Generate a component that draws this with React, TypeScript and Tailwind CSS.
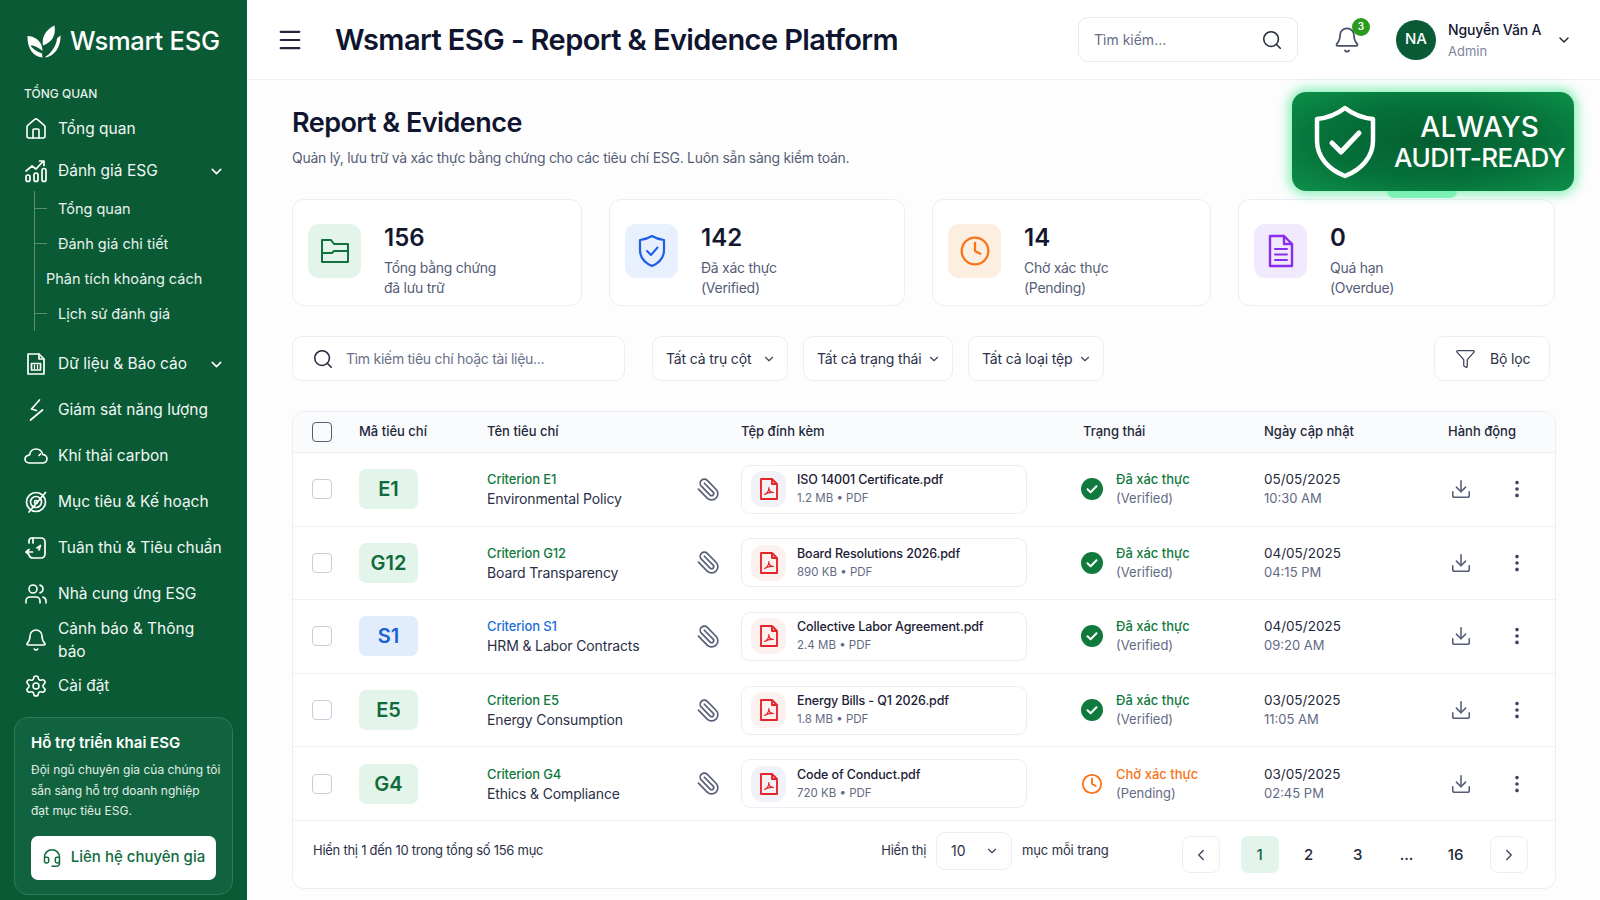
import {
  Bell,
  ChevronDown,
  ChevronLeft,
  ChevronRight,
  Clock,
  Download,
  Funnel,
  Headset,
  House,
  Menu,
  MoreVertical,
  Paperclip,
  Search,
  Settings,
  Users,
} from "lucide-react"
import type { ReactNode } from "react"

function Svg({ children, className }: { children: ReactNode; className?: string }) {
  return (
    <svg viewBox="0 0 24 24" fill="none" stroke="currentColor" strokeWidth="1.7" strokeLinecap="round" strokeLinejoin="round" className={className}>
      {children}
    </svg>
  )
}

function Logo() {
  return (
    <svg viewBox="0 0 34 33" className="w-[34px] h-[33px]" fill="#fff">
      <path d="M0.5 11C6 11 11.5 14 14 19C15 21.5 15.5 24 15.5 26C10 21 5 20 3.2 20.6C6 24 10 27 15 28.5L15.5 32.5C7 32 0 24 0.5 11Z" />
      <path d="M16 20.5C14.5 13 18 5 27.5 0.5C29 9 26 17 16 20.5Z" />
      <path d="M33.5 10.5C34 22 27 32 17.5 32.5C24 28.5 29.5 21 30 13.5C31 12.5 32 11.5 33.5 10.5Z" />
    </svg>
  )
}

function ChartIcon() {
  return (
    <Svg className="w-6 h-6">
      <rect x="2" y="16" width="4" height="6.5" rx="2" />
      <rect x="10" y="14" width="4" height="8.5" rx="2" />
      <rect x="18" y="9.5" width="4" height="13" rx="2" />
      <path d="M2 12L8 7L12 10L19 2.5M15.5 2H20V6.5" />
    </Svg>
  )
}

function DataIcon() {
  return (
    <Svg className="w-6 h-6">
      <path d="M4 2H15L20 7V22H4Z" />
      <path d="M15 2V7H20" />
      <rect x="7.5" y="11.5" width="9" height="6.5" />
      <path d="M10.5 13v3.5M13.5 13v3.5" strokeWidth="1.2" />
    </Svg>
  )
}

function EnergyIcon() {
  return (
    <Svg className="w-6 h-6">
      <path d="M15.5 2L7.5 11L12.5 12.5" />
      <path d="M18.5 12L6.5 22" />
    </Svg>
  )
}

function CloudIcon() {
  return (
    <Svg className="w-6 h-6">
      <path d="M6 19H18.5C21 19 23 17.2 23 14.8C23 12.4 21 10.6 18.8 10.6C18 7.4 15.2 5 12 5C8.6 5 6 7.5 5.6 10.8C3 11.2 1 13 1 15.2C1 17.4 3.2 19 6 19Z" />
      <path d="M15 11.5L16.5 10" />
    </Svg>
  )
}

function TargetIcon() {
  return (
    <Svg className="w-6 h-6">
      <circle cx="12" cy="12" r="9.5" />
      <circle cx="12" cy="12" r="5.5" />
      <circle cx="12" cy="12" r="1.5" />
      <path d="M21.5 2.5L5 22" />
    </Svg>
  )
}

function ComplianceIcon() {
  return (
    <Svg className="w-6 h-6">
      <path d="M5 7V5C5 3.3 6.3 2 8 2H17C19.2 2 21 3.8 21 6V18C21 20.2 19.2 22 17 22H9C7 22 5.5 21 5 19" />
      <path d="M9 2V7" />
      <path d="M13 12L16.5 9.5L15 14" />
      <path d="M2 16H8.5M5 13.5L2 16L5 18.5" />
    </Svg>
  )
}

function PdfIcon() {
  return (
    <svg viewBox="0 0 24 24" fill="none" stroke="#e6252a" strokeWidth="1.9" strokeLinejoin="round" className="w-6 h-[26px]">
      <path d="M4 2H15L20 7V22H4Z" />
      <path d="M15 2V7H20" />
      <path d="M7.5 17.5C10 16.5 11.8 13.5 11.8 10.5C11.8 13.5 13.5 15.5 16.5 15.5C13.5 15.2 10 16 7.5 17.5Z" strokeWidth="1.1" />
    </svg>
  )
}

function CheckCircle() {
  return (
    <svg viewBox="0 0 22 22" className="w-[22px] h-[22px]">
      <circle cx="11" cy="11" r="11" fill="#107a3e" />
      <path d="M6.5 11.3L9.6 14.2L15.5 8.2" fill="none" stroke="#fff" strokeWidth="2" strokeLinecap="round" strokeLinejoin="round" />
    </svg>
  )
}

function NavRow({ icon, label, chevron, tall }: { icon: ReactNode; label: string; chevron?: boolean; tall?: boolean }) {
  return (
    <div className={tall ? "flex items-center h-[46px] pl-[24px] pr-[22px]" : "flex items-center h-[42px] pl-[24px] pr-[22px]"}>
      <div className="w-[24px] flex justify-center text-white">{icon}</div>
      <span className="ml-[10px] text-[15.5px] text-[#f1f7f3] flex-1">{label}</span>
      {chevron && <ChevronDown className="w-[17px] h-[17px] text-white" strokeWidth={2.2} />}
    </div>
  )
}

function Sidebar() {
  const sub = ["Tổng quan", "Đánh giá chi tiết", "Phân tích khoảng cách", "Lịch sử đánh giá"]
  return (
    <aside className="w-[247px] h-[900px] shrink-0 bg-[#0a5a36] flex flex-col">
      <div className="flex items-center h-[84px] pl-[27px] pb-[1px]">
        <Logo />
        <span className="ml-[9px] text-[25.5px] font-medium tracking-[-0.01em] text-white">Wsmart ESG</span>
      </div>
      <div className="h-[24px] pl-[24px] text-[12px] font-medium leading-[20px] text-[#e4efe9]">TỔNG QUAN</div>
      <NavRow icon={<House className="w-6 h-6" strokeWidth={1.6} />} label="Tổng quan" />
      <NavRow icon={<ChartIcon />} label="Đánh giá ESG" chevron />
      <div className="ml-[34px] mt-[-1px] mb-[10px] w-[160px] border-l border-[#5a8d75]">
        {sub.map((s) => (
          <div key={s} className="flex items-center h-[35px]">
            <div className="w-[12px] h-px bg-[#5a8d75]" />
            <span className="ml-[11px] text-[14.5px] text-[#e9f2ed] whitespace-nowrap">{s}</span>
          </div>
        ))}
      </div>
      <NavRow tall icon={<DataIcon />} label="Dữ liệu & Báo cáo" chevron />
      <NavRow tall icon={<EnergyIcon />} label="Giám sát năng lượng" />
      <NavRow tall icon={<CloudIcon />} label="Khí thải carbon" />
      <NavRow tall icon={<TargetIcon />} label="Mục tiêu & Kế hoạch" />
      <NavRow tall icon={<ComplianceIcon />} label="Tuân thủ & Tiêu chuẩn" />
      <NavRow tall icon={<Users className="w-6 h-6" strokeWidth={1.6} />} label="Nhà cung ứng ESG" />
      <NavRow tall icon={<Bell className="w-6 h-6" strokeWidth={1.6} />} label="Cảnh báo & Thông báo" />
      <NavRow tall icon={<Settings className="w-6 h-6" strokeWidth={1.6} />} label="Cài đặt" />
      <div className="mx-[14px] mt-[8px] h-[178px] rounded-[14px] border border-[#2f7a58] bg-[#116340] px-[16px] pt-[13px]">
        <div className="text-[15px] font-semibold text-white leading-[24px]">Hỗ trợ triển khai ESG</div>
        <div className="mt-[5px] text-[12px] leading-[20.5px] text-[#e1ede7] whitespace-nowrap">
          Đội ngũ chuyên gia của chúng tôi
          <br />
          sẵn sàng hỗ trợ doanh nghiệp
          <br />
          đạt mục tiêu ESG.
        </div>
        <div className="mt-[14px] h-[44px] rounded-[7px] bg-white flex items-center justify-center text-[#0f6b3e]">
          <Headset className="w-[20px] h-[20px]" strokeWidth={1.8} />
          <span className="ml-[9px] text-[15px] font-medium">Liên hệ chuyên gia</span>
        </div>
      </div>
    </aside>
  )
}

function Header() {
  return (
    <header className="h-[80px] shrink-0 border-b border-[#eef0f5] bg-white flex items-center pl-[31px] pr-[28px]">
      <Menu className="w-[28px] h-[28px] text-[#23283b] mr-[5px] -ml-[2px]" strokeWidth={1.8} />
      <h1 className="ml-[26px] text-[29px] font-semibold tracking-[-0.02em] text-[#10152f] flex-1 whitespace-nowrap">Wsmart ESG - Report & Evidence Platform</h1>
      <div className="w-[220px] h-[45px] rounded-[10px] border border-[#e8eaf3] flex items-center pl-[15px] pr-[14px]">
        <span className="flex-1 text-[14px] text-[#666d85]">Tìm kiếm...</span>
        <Search className="w-[22px] h-[22px] text-[#23283b]" strokeWidth={1.7} />
      </div>
      <div className="relative ml-[35px] mr-[35px]">
        <Bell className="w-[28px] h-[28px] text-[#474f6b]" strokeWidth={1.5} />
        <span className="absolute -top-[8px] left-[19px] w-[18px] h-[18px] rounded-full bg-[#2a9b1e] text-white text-[10px] font-semibold flex items-center justify-center">3</span>
      </div>
      <div className="w-[40px] h-[40px] rounded-full bg-[#0a5a36] text-white text-[15px] font-medium flex items-center justify-center">NA</div>
      <div className="ml-[12px] w-[108px]">
        <div className="text-[14px] font-medium text-[#14182f] leading-[22px] tracking-[-0.01em] whitespace-nowrap">Nguyễn Văn A</div>
        <div className="text-[13px] text-[#7d849c] leading-[20px]">Admin</div>
      </div>
      <ChevronDown className="w-[16px] h-[16px] text-[#23283b]" strokeWidth={2.2} />
    </header>
  )
}

function AuditBadge() {
  return (
    <div className="absolute top-[92px] left-[1292px] w-[282px] h-[99px] rounded-[14px] bg-[radial-gradient(ellipse_at_center,#055f30_0%,#06713a_55%,#0c9149_100%)] shadow-[0_0_12px_3px_rgba(62,232,140,0.65)] flex items-center pl-[22px]">
      <svg viewBox="0 0 62 74" className="w-[62px] h-[74px]" fill="none" stroke="#fff" strokeLinecap="round" strokeLinejoin="round">
        <path d="M31 3C40 10 49 13 59 14V36C59 52 47 65 31 71C15 65 3 52 3 36V14C13 13 22 10 31 3Z" strokeWidth="4.5" />
        <path d="M18 38L27 47L45 28" strokeWidth="5" />
      </svg>
      <div className="ml-[18px] text-white text-center font-medium whitespace-nowrap">
        <div className="text-[28px] leading-[32px] tracking-[0.01em]">ALWAYS</div>
        <div className="text-[26px] leading-[30px] tracking-[-0.02em]">AUDIT-READY</div>
      </div>
      <div className="absolute -bottom-[7px] left-[95px] w-[70px] h-[7px] rounded-b-full bg-[#6cf0ab] opacity-80" />
    </div>
  )
}

const stats = [
  { n: "156", l1: "Tổng bằng chứng", l2: "đã lưu trữ", bg: "bg-[#e3f4ea]", icon: <FolderIcon /> },
  { n: "142", l1: "Đã xác thực", l2: "(Verified)", bg: "bg-[#e8f0fe]", icon: <ShieldIcon /> },
  { n: "14", l1: "Chờ xác thực", l2: "(Pending)", bg: "bg-[#fdeee2]", icon: <Clock className="w-[32px] h-[32px] text-[#f97316]" strokeWidth={1.7} /> },
  { n: "0", l1: "Quá hạn", l2: "(Overdue)", bg: "bg-[#f1eafd]", icon: <DocIcon /> },
]

function FolderIcon() {
  return (
    <svg viewBox="0 0 30 30" className="w-[30px] h-[30px]" fill="none" stroke="#11703c" strokeWidth="2" strokeLinejoin="round" strokeLinecap="round">
      <path d="M2 4H11L14 8H28V26H2Z" />
      <path d="M2 17H12L14 15H28" />
    </svg>
  )
}

function ShieldIcon() {
  return (
    <svg viewBox="0 0 28 34" className="w-[28px] h-[34px]" fill="none" stroke="#1d5fe8" strokeWidth="2.2" strokeLinejoin="round" strokeLinecap="round">
      <path d="M14 2C18 4.5 22 5.5 26 6V16C26 24 21 29 14 32C7 29 2 24 2 16V6C6 5.5 10 4.5 14 2Z" />
      <path d="M9 17L13 21L19.5 13.5" strokeWidth="2" />
    </svg>
  )
}

function DocIcon() {
  return (
    <svg viewBox="0 0 26 34" className="w-[26px] h-[34px]" fill="none" stroke="#8b2cf0" strokeWidth="2.4" strokeLinejoin="round" strokeLinecap="round">
      <path d="M2 2H16L24 10V32H2Z" />
      <path d="M16 2V10H24" />
      <path d="M7 15H19M7 20.5H19M7 26H19" strokeWidth="2" />
    </svg>
  )
}

function Stats() {
  return (
    <div className="grid grid-cols-[290px_296px_279px_317px] gap-x-[27px] mt-[31px]">
      {stats.map((s) => (
        <div key={s.n} className="h-[107px] rounded-[12px] border border-[#eceef6] bg-white flex pl-[15px] pt-[24px]">
          <div className={"w-[53px] h-[54px] rounded-[11px] flex items-center justify-center " + s.bg}>{s.icon}</div>
          <div className="ml-[23px] -mt-[1px]">
            <div className="text-[24px] font-semibold leading-[30px] text-[#14182f]">{s.n}</div>
            <div className="mt-[5px] text-[14px] leading-[20px] tracking-[-0.02em] text-[#565d77]">{s.l1}</div>
            <div className="text-[14px] leading-[20px] tracking-[-0.02em] text-[#565d77]">{s.l2}</div>
          </div>
        </div>
      ))}
    </div>
  )
}

function FilterSelect({ label, className }: { label: string; className: string }) {
  return (
    <div className={"h-[45px] rounded-[10px] border border-[#eceef6] bg-white flex items-center justify-between pl-[13px] pr-[11px] " + className}>
      <span className="text-[14px] tracking-[-0.01em] text-[#2b3047] whitespace-nowrap">{label}</span>
      <ChevronDown className="w-[14px] h-[14px] text-[#40465f]" strokeWidth={2} />
    </div>
  )
}

function Filters() {
  return (
    <div className="flex items-center mt-[30px]">
      <div className="w-[333px] h-[45px] rounded-[10px] border border-[#eceef6] bg-white flex items-center pl-[19px]">
        <Search className="w-[22px] h-[22px] text-[#23283b]" strokeWidth={1.7} />
        <span className="ml-[12px] text-[14px] tracking-[-0.02em] text-[#6a7089]">Tìm kiếm tiêu chí hoặc tài liệu...</span>
      </div>
      <FilterSelect label="Tất cả trụ cột" className="ml-[27px] w-[136px]" />
      <FilterSelect label="Tất cả trạng thái" className="ml-[15px] w-[150px]" />
      <FilterSelect label="Tất cả loại tệp" className="ml-[15px] w-[136px]" />
      <div className="ml-[330px] w-[116px] h-[45px] rounded-[10px] border border-[#eceef6] bg-white flex items-center pl-[20px]">
        <Funnel className="w-[21px] h-[21px] text-[#40465f]" strokeWidth={1.5} />
        <span className="ml-[14px] text-[14px] tracking-[-0.01em] text-[#2b3047]">Bộ lọc</span>
      </div>
    </div>
  )
}

const rows = [
  { code: "E1", c: "Criterion E1", name: "Environmental Policy", file: "ISO 14001 Certificate.pdf", meta: "1.2 MB • PDF", date: "05/05/2025", time: "10:30 AM", tone: "green", fileBg: "bg-[#f0f2f7]", ok: true },
  { code: "G12", c: "Criterion G12", name: "Board Transparency", file: "Board Resolutions 2026.pdf", meta: "890 KB • PDF", date: "04/05/2025", time: "04:15 PM", tone: "green", fileBg: "bg-[#fdf1f0]", ok: true },
  { code: "S1", c: "Criterion S1", name: "HRM & Labor Contracts", file: "Collective Labor Agreement.pdf", meta: "2.4 MB • PDF", date: "04/05/2025", time: "09:20 AM", tone: "blue", fileBg: "bg-[#fdf1f0]", ok: true },
  { code: "E5", c: "Criterion E5", name: "Energy Consumption", file: "Energy Bills - Q1 2026.pdf", meta: "1.8 MB • PDF", date: "03/05/2025", time: "11:05 AM", tone: "green", fileBg: "bg-[#fdf1f0]", ok: true },
  { code: "G4", c: "Criterion G4", name: "Ethics & Compliance", file: "Code of Conduct.pdf", meta: "720 KB • PDF", date: "03/05/2025", time: "02:45 PM", tone: "green", fileBg: "bg-[#f0f2f7]", ok: false },
]

const cols = "grid grid-cols-[66px_128px_254px_342px_181px_184px_108px] items-center"

function Table() {
  return (
    <div className="mt-[30px] w-[1264px] h-[478px] rounded-[12px] border border-[#eceef6] bg-white overflow-hidden">
      <div className={cols + " h-[41px] bg-[#fafbfd] border-b border-[#eef0f6] text-[13px] font-medium text-[#23283b]"}>
        <div className="pl-[19px]">
          <div className="w-[20px] h-[20px] rounded-[4px] border-[1.5px] border-[#565d77]" />
        </div>
        <div>Mã tiêu chí</div>
        <div>Tên tiêu chí</div>
        <div>Tệp đính kèm</div>
        <div>Trạng thái</div>
        <div>Ngày cập nhật</div>
        <div>Hành động</div>
      </div>
      {rows.map((r) => (
        <div key={r.code} className={cols + " h-[73.6px] border-b border-[#eef0f6]"}>
          <div className="pl-[19px]">
            <div className="w-[20px] h-[20px] rounded-[4px] border-[1.5px] border-[#c9cdda]" />
          </div>
          <div className={r.tone === "blue" ? "w-[59px] h-[40px] rounded-[7px] bg-[#e1edfd] text-[#1c5fd4] flex items-center justify-center text-[20px] font-semibold" : "w-[59px] h-[40px] rounded-[7px] bg-[#e3f4ea] text-[#0e6b3a] flex items-center justify-center text-[20px] font-semibold"}>
            {r.code}
          </div>
          <div className="flex items-center pr-[20px]">
            <div className="flex-1 whitespace-nowrap">
              <div className={r.tone === "blue" ? "text-[13px] font-medium leading-[20px] tracking-[-0.01em] text-[#1a6fd8]" : "text-[13px] font-medium leading-[20px] tracking-[-0.01em] text-[#0f7a3d]"}>{r.c}</div>
              <div className="text-[14px] leading-[20px] tracking-[-0.01em] text-[#2b3047]">{r.name}</div>
            </div>
            <Paperclip className="w-[25px] h-[25px] text-[#565d77] -scale-x-100" strokeWidth={1.6} />
          </div>
          <div>
            <div className="w-[286px] h-[49px] rounded-[9px] border border-[#eceef6] bg-white flex items-center pl-[9px]">
              <div className={"w-[35px] h-[36px] rounded-[12px] flex items-center justify-center " + r.fileBg}>
                <PdfIcon />
              </div>
              <div className="ml-[11px] whitespace-nowrap">
                <div className="text-[12.5px] font-medium leading-[19px] tracking-[-0.01em] text-[#1c2036]">{r.file}</div>
                <div className="text-[11.5px] leading-[19px] text-[#626a84]">{r.meta}</div>
              </div>
            </div>
          </div>
          <div className="flex items-center">
            <div className="w-[22px] flex justify-center -ml-[2px]">
              {r.ok ? <CheckCircle /> : <Clock className="w-[24px] h-[24px] text-[#f97316]" strokeWidth={2} />}
            </div>
            <div className="ml-[13px] whitespace-nowrap">
              <div className={r.ok ? "text-[13px] font-medium leading-[19px] text-[#0f7a3d]" : "text-[13px] font-medium leading-[19px] text-[#f97316]"}>{r.ok ? "Đã xác thực" : "Chờ xác thực"}</div>
              <div className="text-[13px] leading-[19px] text-[#626a84]">{r.ok ? "(Verified)" : "(Pending)"}</div>
            </div>
          </div>
          <div>
            <div className="text-[13.5px] leading-[19px] text-[#23283b]">{r.date}</div>
            <div className="text-[13px] leading-[19px] text-[#626a84]">{r.time}</div>
          </div>
          <div className="flex items-center">
            <Download className="ml-[2px] w-[22px] h-[22px] text-[#565d77]" strokeWidth={1.7} />
            <MoreVertical className="ml-[34px] w-[22px] h-[22px] text-[#3d4460]" strokeWidth={2} />
          </div>
        </div>
      ))}
      <div className="flex items-center h-[68px] pl-[20px]">
        <span className="text-[13px] tracking-[-0.02em] text-[#2b3047] whitespace-nowrap -mt-[8px]">Hiển thị 1 đến 10 trong tổng số 156 mục</span>
        <span className="ml-[338px] text-[13px] tracking-[-0.02em] text-[#2b3047] -mt-[8px]">Hiển thị</span>
        <div className="ml-[10px] w-[76px] h-[38px] rounded-[9px] border border-[#eceef6] flex items-center justify-between pl-[14px] pr-[12px] -mt-[8px]">
          <span className="text-[14px] text-[#2b3047]">10</span>
          <ChevronDown className="w-[14px] h-[14px] text-[#40465f]" strokeWidth={2} />
        </div>
        <span className="ml-[10px] text-[13px] tracking-[-0.01em] text-[#2b3047] whitespace-nowrap -mt-[8px]">mục mỗi trang</span>
        <div className="ml-[73px] flex items-center">
          <div className="w-[38px] h-[37px] rounded-[8px] border border-[#eceef6] flex items-center justify-center">
            <ChevronLeft className="w-[18px] h-[18px] text-[#3d4460]" strokeWidth={1.8} />
          </div>
          <div className="ml-[21px] w-[38px] h-[37px] rounded-[7px] bg-[#e3f4ea] text-[#0e6b3a] text-[15px] font-medium flex items-center justify-center">1</div>
          {["2", "3", "...", "16"].map((p) => (
            <div key={p} className="ml-[11px] w-[38px] h-[37px] text-[15px] font-medium text-[#23283b] flex items-center justify-center">{p}</div>
          ))}
          <div className="ml-[15px] w-[38px] h-[37px] rounded-[8px] border border-[#eceef6] flex items-center justify-center">
            <ChevronRight className="w-[18px] h-[18px] text-[#3d4460]" strokeWidth={1.8} />
          </div>
        </div>
      </div>
    </div>
  )
}

export default function App() {
  return (
    <div className="relative w-[1600px] h-[900px] overflow-hidden flex bg-[#fdfdfe] font-['Inter',sans-serif]">
      <Sidebar />
      <main className="flex-1 min-w-0 flex flex-col">
        <Header />
        <div className="pl-[45px] pr-[30px] pt-[26px]">
          <h2 className="text-[27px] font-semibold tracking-[-0.02em] leading-[34px] text-[#10152f]">Report & Evidence</h2>
          <p className="mt-[8px] text-[14px] leading-[20px] tracking-[-0.02em] text-[#565d77]">Quản lý, lưu trữ và xác thực bằng chứng cho các tiêu chí ESG. Luôn sẵn sàng kiểm toán.</p>
          <Stats />
          <Filters />
          <Table />
        </div>
      </main>
      <AuditBadge />
    </div>
  )
}
